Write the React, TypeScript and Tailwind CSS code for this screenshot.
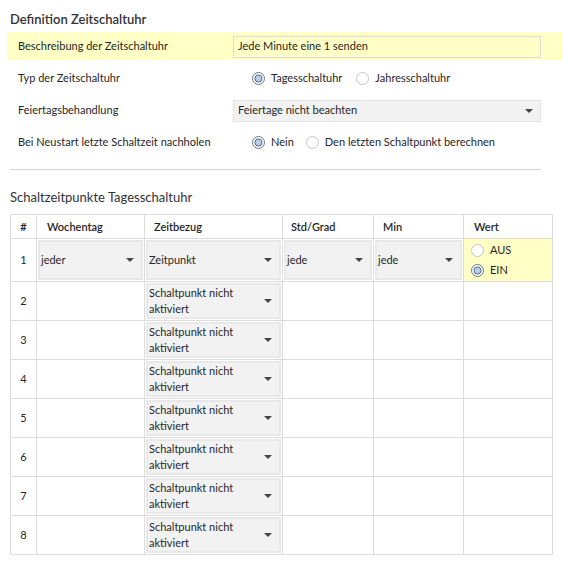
const font = { fontFamily: "Lato, 'Open Sans', sans-serif" };

function Radio({ checked }: { checked?: boolean }) {
  return (
    <svg width="13" height="13" viewBox="0 0 13 13" className="shrink-0">
      {checked ? (
        <>
          <circle cx="6.5" cy="6.5" r="6" fill="#fff" stroke="#6a7485" />
          <circle cx="6.5" cy="6.5" r="3.6" fill="#bccde3" stroke="#4d6a93" />
        </>
      ) : (
        <circle cx="6.5" cy="6.5" r="6" fill="#fff" stroke="#c6c6c6" />
      )}
    </svg>
  );
}

function Arrow() {
  return (
    <svg width="8" height="4" viewBox="0 0 8 4" className="shrink-0">
      <path d="M0 0 L8 0 L4 4 Z" fill="#444" />
    </svg>
  );
}

function Option({ checked, label }: { checked?: boolean; label: string }) {
  return (
    <div className="flex h-[13px] items-center gap-[6px]">
      <Radio checked={checked} />
      <span>{label}</span>
    </div>
  );
}

function Row({ label, children, highlight }: { label: string; children: React.ReactNode; highlight?: boolean }) {
  return (
    <div className={`flex h-[28px] items-center rounded-l-[3px] pt-px ${highlight ? "bg-[#ffffc6]" : ""}`}>
      <div className="w-[226px] pl-[11px]">{label}</div>
      {children}
    </div>
  );
}

function CellSelect({ text, two }: { text: string; two?: boolean }) {
  return (
    <div className="flex h-full items-center justify-between border-2 border-[#e8e8e8] bg-[#f2f2f2] pl-[1px] pr-[7px]">
      <span className={two ? "whitespace-pre-line leading-[16px]" : ""}>{text}</span>
      <Arrow />
    </div>
  );
}

const rows = [2, 3, 4, 5, 6, 7, 8];
const cell = "border border-[#dcdcdc]";

export default function App() {
  return (
    <div className="min-h-screen bg-white text-[11px] text-[#262626]" style={font}>
      <div className="pt-[10px]">
        <h2 className="ml-[10px] h-[22px] text-[13px] font-semibold text-[#333]">Definition Zeitschaltuhr</h2>
        <div className="ml-[7px] flex flex-col gap-[4px]">
          <Row label="Beschreibung der Zeitschaltuhr" highlight>
            <div className="flex h-[22px] w-[308px] items-center border border-[#dcdcdc] px-[4px]">
              Jede Minute eine 1 senden
            </div>
          </Row>
          <Row label="Typ der Zeitschaltuhr">
            <div className="flex items-center gap-[14px] pl-[19px]">
              <Option checked label="Tagesschaltuhr" />
              <Option label="Jahresschaltuhr" />
            </div>
          </Row>
          <Row label="Feiertagsbehandlung">
            <div className="flex h-[22px] w-[308px] items-center justify-between border border-[#e3e3e3] bg-[#f2f2f2] pl-[4px] pr-[7px]">
              <span>Feiertage nicht beachten</span>
              <Arrow />
            </div>
          </Row>
          <Row label="Bei Neustart letzte Schaltzeit nachholen">
            <div className="flex items-center gap-[12px] pl-[19px]">
              <Option checked label="Nein" />
              <Option label="Den letzten Schaltpunkt berechnen" />
            </div>
          </Row>
        </div>
        <div className="mx-[10px] mt-[13px] w-[531px] border-t border-[#d6d6d6]" />
        <h2 className="ml-[10px] mt-[18px] h-[26px] text-[13px] text-[#333]">Schaltzeitpunkte Tagesschaltuhr</h2>
        <table className="ml-[10px] w-[542px] table-fixed border-collapse">
          <colgroup>
            <col className="w-[26px]" />
            <col className="w-[108px]" />
            <col className="w-[138px]" />
            <col className="w-[91px]" />
            <col className="w-[90px]" />
            <col className="w-[89px]" />
          </colgroup>
          <thead>
            <tr className="h-[24px] text-left">
              <th className={`${cell} pt-px text-center font-semibold`}>#</th>
              <th className={`${cell} pl-[10px] pt-px font-semibold`}>Wochentag</th>
              <th className={`${cell} pl-[9px] pt-px font-semibold`}>Zeitbezug</th>
              <th className={`${cell} pl-[8px] pt-px font-semibold`}>Std/Grad</th>
              <th className={`${cell} pl-[9px] pt-px font-semibold`}>Min</th>
              <th className={`${cell} pl-[10px] pt-px font-semibold`}>Wert</th>
            </tr>
          </thead>
          <tbody>
            <tr className="h-[43px]">
              <td className={`${cell} text-center`}>1</td>
              <td className={`${cell} h-[43px] p-px`}>
                <CellSelect text="jeder" />
              </td>
              <td className={`${cell} h-[43px] p-px`}>
                <CellSelect text="Zeitpunkt" />
              </td>
              <td className={`${cell} h-[43px] p-px`}>
                <CellSelect text="jede" />
              </td>
              <td className={`${cell} h-[43px] p-px`}>
                <CellSelect text="jede" />
              </td>
              <td className={`${cell} bg-[#ffffc6] pl-[7px]`}>
                <div className="flex flex-col gap-[7px]">
                  <Option label="AUS" />
                  <Option checked label="EIN" />
                </div>
              </td>
            </tr>
            {rows.map((n) => (
              <tr key={n} className="h-[39px]">
                <td className={`${cell} text-center`}>{n}</td>
                <td className={cell} />
                <td className={`${cell} h-[39px] p-px`}>
                  <CellSelect text={"Schaltpunkt nicht\naktiviert"} two />
                </td>
                <td className={cell} />
                <td className={cell} />
                <td className={cell} />
              </tr>
            ))}
          </tbody>
        </table>
      </div>
    </div>
  );
}
